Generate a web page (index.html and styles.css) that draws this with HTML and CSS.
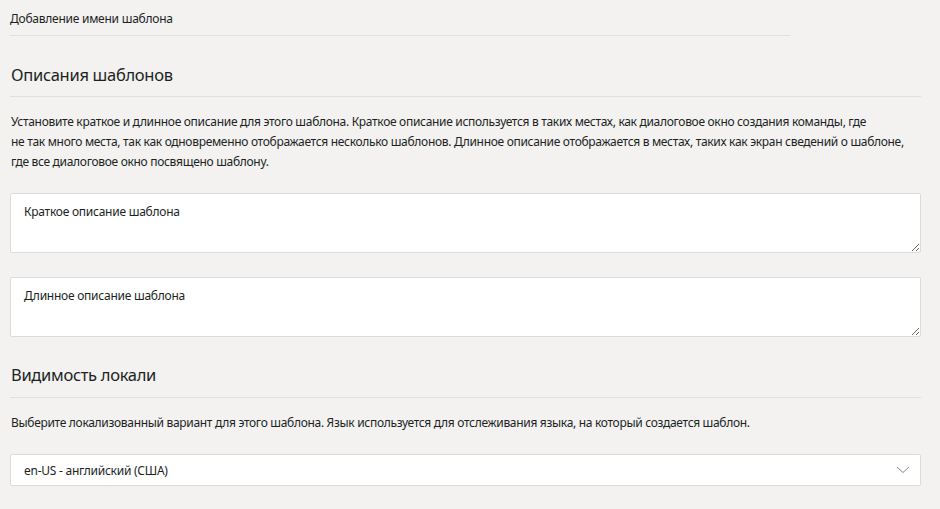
FILE: index.html
```html
<!DOCTYPE html>
<html lang="ru">
<head>
<meta charset="utf-8">
<link rel="stylesheet" href="styles.css">
</head>
<body>
<div class="page">
  <div class="name-row">Добавление имени шаблона</div>

  <section class="section">
    <h2 class="section-title">Описания шаблонов</h2>
    <p class="desc">Установите краткое и длинное описание для этого шаблона. Краткое описание используется в таких местах, как диалоговое окно создания команды, где<br>не так много места, так как одновременно отображается несколько шаблонов. Длинное описание отображается в местах, таких как экран сведений о шаблоне,<br>где все диалоговое окно посвящено шаблону.</p>
    <textarea class="field" placeholder="Краткое описание шаблона"></textarea>
    <textarea class="field field-second" placeholder="Длинное описание шаблона"></textarea>
  </section>

  <section class="section">
    <h2 class="section-title">Видимость локали</h2>
    <p class="desc">Выберите локализованный вариант для этого шаблона. Язык используется для отслеживания языка, на который создается шаблон.</p>
    <div class="select">
      <span class="select-text">en-US - английский (США)</span>
      <svg class="chevron" width="14" height="8" viewBox="0 0 14 8"><path d="M1 1 L7 6.5 L13 1" fill="none" stroke="#8a8886" stroke-width="1"/></svg>
    </div>
  </section>
</div>
</body>
</html>
```

FILE: styles.css
```css
html, body {
  margin: 0;
  padding: 0;
  background: #f3f2f1;
}
body {
  font-family: "Noto Sans", "Open Sans", sans-serif;
  color: #201f1e;
  font-size: 12px;
  letter-spacing: -0.25px;
}
.page {
  padding: 0 19px 0 10px;
}
.name-row {
  width: 780px;
  height: 36px;
  box-sizing: border-box;
  padding-top: 10px;
  line-height: 18px;
  border-bottom: 1px solid #e1dfdd;
}
.section-title {
  margin: 0;
  font-weight: 400;
  font-size: 16.5px;
  letter-spacing: -0.3px;
  line-height: 22px;
  padding: 28px 0 0 1px;
  height: 61px;
  box-sizing: border-box;
  border-bottom: 1px solid #e1dfdd;
  color: #201f1e;
}
.section + .section .section-title {
  padding-top: 27px;
}
.desc {
  margin: 0;
  padding: 15px 0 0 1px;
  line-height: 20px;
  letter-spacing: -0.31px;
  white-space: nowrap;
}
.field {
  display: block;
  width: 100%;
  height: 60px;
  box-sizing: border-box;
  margin: 21px 0 0 0;
  padding: 9px 13px;
  border: 1px solid #dddbd9;
  border-radius: 2px;
  background: #fff;
  font: inherit;
  font-size: 12px;
  letter-spacing: -0.25px;
  line-height: 18px;
  resize: vertical;
  outline: none;
}
.field::placeholder {
  color: #201f1e;
  opacity: 1;
}
.field-second {
  margin-top: 24px;
}
.select {
  margin-top: 21px;
  height: 32px;
  box-sizing: border-box;
  border: 1px solid #dddbd9;
  border-radius: 2px;
  background: #fff;
  display: flex;
  align-items: center;
  justify-content: space-between;
  padding: 0 10px 0 13px;
}
.chevron {
  display: block;
}
```
